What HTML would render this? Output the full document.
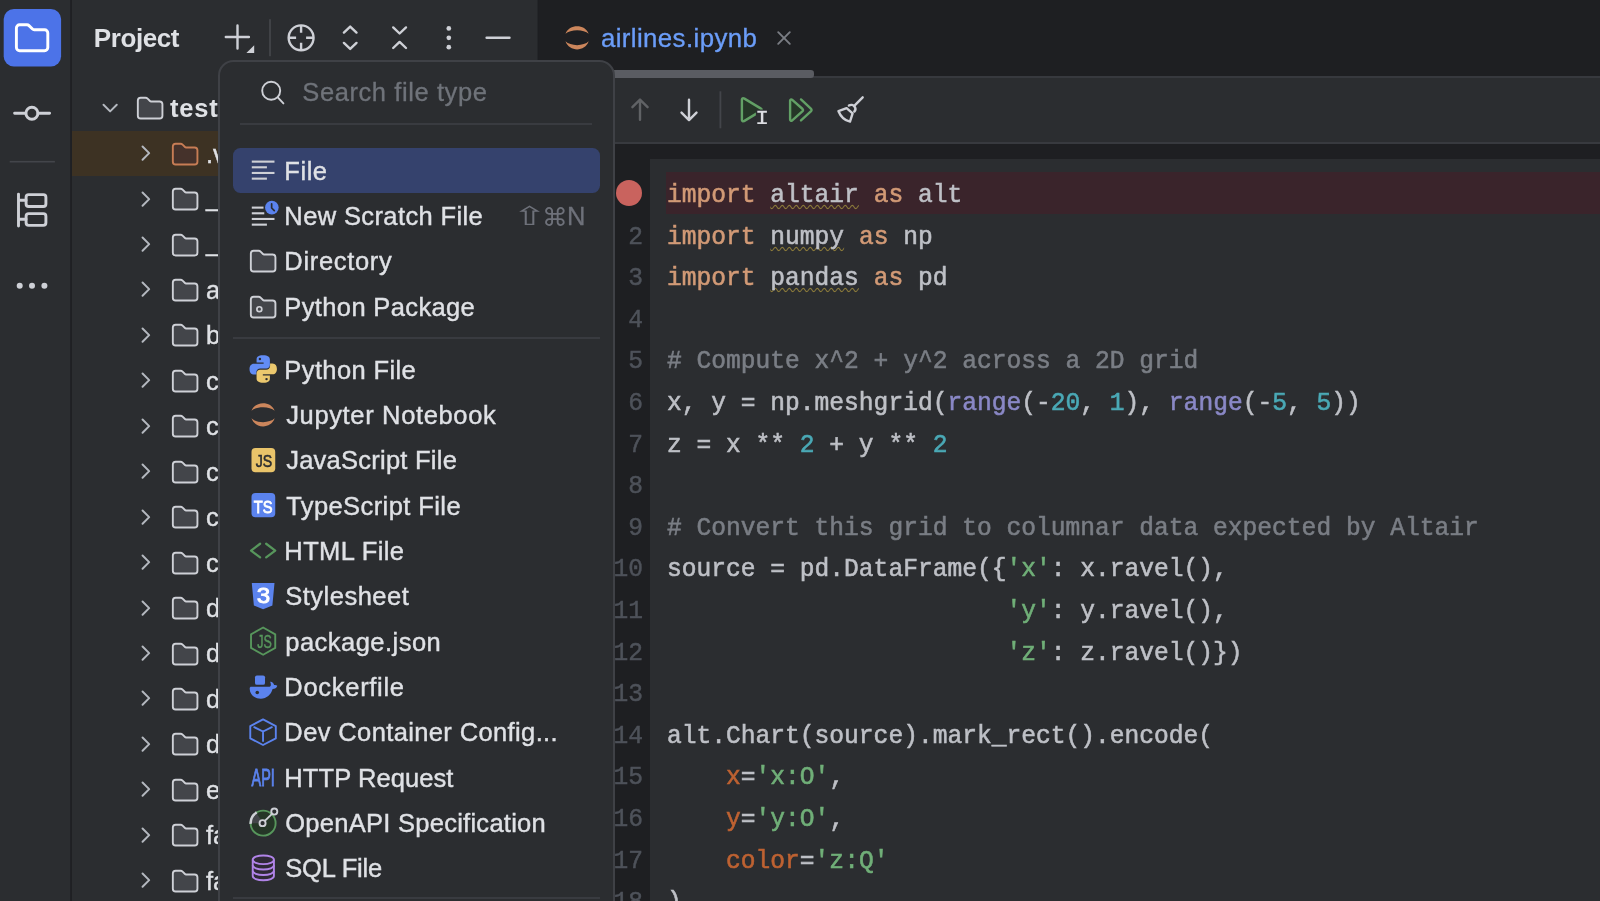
<!DOCTYPE html><html><head><meta charset="utf-8"><title>PyCharm</title><style>
*{box-sizing:border-box;margin:0;padding:0}
html,body{width:1600px;height:901px;overflow:hidden;background:#2b2d30}
body{position:relative;font-family:"Liberation Sans",sans-serif;color:#dfe1e5;font-size:25px}
.abs{position:absolute}
.ic{position:absolute;overflow:visible}
#root{position:absolute;left:0;top:0;width:1600px;height:901px;overflow:hidden;will-change:transform}
#stripe{position:absolute;left:0;top:0;width:72px;height:901px;background:#2b2d30}
#side{position:absolute;left:72px;top:0;width:466px;height:901px;background:#2b2d30}
#editor{position:absolute;left:538px;top:0;width:1062px;height:901px;background:#1e1f22}
.t{position:absolute;white-space:nowrap;line-height:30px;height:30px}
.row{position:absolute;left:0;width:220px;height:45.4px}
#popup{position:absolute;left:217.7px;top:59.9px;width:397.6px;height:900px;background:#2b2d30;border:2px solid #3f4146;border-radius:15.5px}
.mi{position:absolute;left:67px;white-space:nowrap;line-height:30px;height:30px;font-size:25.5px;color:#dfe1e5;-webkit-text-stroke:0.4px #dfe1e5}
.code{position:absolute;left:667px;white-space:pre;font-family:"Liberation Mono",monospace;font-size:24.6px;line-height:41.7px;height:41.7px;color:#bec0c6;-webkit-text-stroke:0.55px;transform:scaleY(1.08);transform-origin:0 27.4px}
.ln{position:absolute;width:60px;left:583px;text-align:right;font-family:"Liberation Mono",monospace;font-size:24.6px;line-height:41.7px;height:41.7px;color:#4e525a;white-space:pre;-webkit-text-stroke:0.45px;transform:scaleY(1.08);transform-origin:0 27.4px}
.k{color:#d29a76}.c{color:#7a7e85}.n{color:#4aa9b6}.s{color:#70af78}.b{color:#8a88c6}.a{color:#be6232}
.w{text-decoration:underline wavy #8b7a3a 1.4px;text-underline-offset:2.4px;text-decoration-skip-ink:none}
</style></head><body><div id="root">
<div id="stripe">
</div>
<div id="side">
<div class="t" style="left:21.8px;top:23px;font-weight:bold;font-size:26px;letter-spacing:-0.42px">Project</div>
<svg class="ic" style="left:22.87px;top:93.06px" width="30.27" height="30.27" viewBox="0 0 16 16" fill="none" ><path d="M4.5 6.2L8 9.7L11.5 6.2" stroke="#b4b8bf" stroke-width="1.05" stroke-linecap="round" stroke-linejoin="round"/></svg>
<svg class="ic" style="left:62.77px;top:92.77px" width="30.27" height="30.27" viewBox="0 0 16 16" fill="none" ><path d="M1.5 4V12C1.5 12.83 2.17 13.5 3 13.5H13C13.83 13.5 14.5 12.83 14.5 12V6C14.5 5.17 13.83 4.5 13 4.5H8.41C8.28 4.5 8.15 4.45 8.06 4.35L6.65 2.94C6.37 2.66 5.98 2.5 5.59 2.5H3C2.17 2.5 1.5 3.17 1.5 4Z" fill="#43454a" stroke="#ced0d6"/></svg>
<div class="t" style="left:98px;top:92.5px;font-weight:bold;font-size:25.5px;letter-spacing:0.8px">test</div>
<div class="abs" style="left:0;top:130.70px;width:200px;height:45px;background:#3d3223"></div>
<svg class="ic" style="left:59.06px;top:138.16px" width="30.27" height="30.27" viewBox="0 0 16 16" fill="none" ><path d="M6.1 4.5L9.6 8L6.1 11.5" stroke="#b4b8bf" stroke-width="1.05" stroke-linecap="round" stroke-linejoin="round"/></svg>
<svg class="ic" style="left:97.67px;top:138.66px" width="30.27" height="30.27" viewBox="0 0 16 16" fill="none" ><path d="M1.5 4V12C1.5 12.83 2.17 13.5 3 13.5H13C13.83 13.5 14.5 12.83 14.5 12V6C14.5 5.17 13.83 4.5 13 4.5H8.41C8.28 4.5 8.15 4.45 8.06 4.35L6.65 2.94C6.37 2.66 5.98 2.5 5.59 2.5H3C2.17 2.5 1.5 3.17 1.5 4Z" fill="#45322b" stroke="#c77d55"/></svg>
<div class="t" style="left:134px;top:138.60px;font-size:25.5px;-webkit-text-stroke:0.4px #dfe1e5">.venv</div>
<svg class="ic" style="left:59.06px;top:183.60px" width="30.27" height="30.27" viewBox="0 0 16 16" fill="none" ><path d="M6.1 4.5L9.6 8L6.1 11.5" stroke="#b4b8bf" stroke-width="1.05" stroke-linecap="round" stroke-linejoin="round"/></svg>
<svg class="ic" style="left:97.67px;top:184.10px" width="30.27" height="30.27" viewBox="0 0 16 16" fill="none" ><path d="M1.5 4V12C1.5 12.83 2.17 13.5 3 13.5H13C13.83 13.5 14.5 12.83 14.5 12V6C14.5 5.17 13.83 4.5 13 4.5H8.41C8.28 4.5 8.15 4.45 8.06 4.35L6.65 2.94C6.37 2.66 5.98 2.5 5.59 2.5H3C2.17 2.5 1.5 3.17 1.5 4Z" fill="#43454a" stroke="#ced0d6"/></svg>
<div class="t" style="left:134px;top:182.04px;font-size:25.5px;-webkit-text-stroke:0.4px #dfe1e5">__pycache__</div>
<svg class="ic" style="left:59.06px;top:229.04px" width="30.27" height="30.27" viewBox="0 0 16 16" fill="none" ><path d="M6.1 4.5L9.6 8L6.1 11.5" stroke="#b4b8bf" stroke-width="1.05" stroke-linecap="round" stroke-linejoin="round"/></svg>
<svg class="ic" style="left:97.67px;top:229.54px" width="30.27" height="30.27" viewBox="0 0 16 16" fill="none" ><path d="M1.5 4V12C1.5 12.83 2.17 13.5 3 13.5H13C13.83 13.5 14.5 12.83 14.5 12V6C14.5 5.17 13.83 4.5 13 4.5H8.41C8.28 4.5 8.15 4.45 8.06 4.35L6.65 2.94C6.37 2.66 5.98 2.5 5.59 2.5H3C2.17 2.5 1.5 3.17 1.5 4Z" fill="#43454a" stroke="#ced0d6"/></svg>
<div class="t" style="left:134px;top:227.48px;font-size:25.5px;-webkit-text-stroke:0.4px #dfe1e5">__init__</div>
<svg class="ic" style="left:59.06px;top:274.49px" width="30.27" height="30.27" viewBox="0 0 16 16" fill="none" ><path d="M6.1 4.5L9.6 8L6.1 11.5" stroke="#b4b8bf" stroke-width="1.05" stroke-linecap="round" stroke-linejoin="round"/></svg>
<svg class="ic" style="left:97.67px;top:274.99px" width="30.27" height="30.27" viewBox="0 0 16 16" fill="none" ><path d="M1.5 4V12C1.5 12.83 2.17 13.5 3 13.5H13C13.83 13.5 14.5 12.83 14.5 12V6C14.5 5.17 13.83 4.5 13 4.5H8.41C8.28 4.5 8.15 4.45 8.06 4.35L6.65 2.94C6.37 2.66 5.98 2.5 5.59 2.5H3C2.17 2.5 1.5 3.17 1.5 4Z" fill="#43454a" stroke="#ced0d6"/></svg>
<div class="t" style="left:134px;top:274.92px;font-size:25.5px;-webkit-text-stroke:0.4px #dfe1e5">airlines</div>
<svg class="ic" style="left:59.06px;top:319.93px" width="30.27" height="30.27" viewBox="0 0 16 16" fill="none" ><path d="M6.1 4.5L9.6 8L6.1 11.5" stroke="#b4b8bf" stroke-width="1.05" stroke-linecap="round" stroke-linejoin="round"/></svg>
<svg class="ic" style="left:97.67px;top:320.43px" width="30.27" height="30.27" viewBox="0 0 16 16" fill="none" ><path d="M1.5 4V12C1.5 12.83 2.17 13.5 3 13.5H13C13.83 13.5 14.5 12.83 14.5 12V6C14.5 5.17 13.83 4.5 13 4.5H8.41C8.28 4.5 8.15 4.45 8.06 4.35L6.65 2.94C6.37 2.66 5.98 2.5 5.59 2.5H3C2.17 2.5 1.5 3.17 1.5 4Z" fill="#43454a" stroke="#ced0d6"/></svg>
<div class="t" style="left:134px;top:320.36px;font-size:25.5px;-webkit-text-stroke:0.4px #dfe1e5">barley</div>
<svg class="ic" style="left:59.06px;top:365.37px" width="30.27" height="30.27" viewBox="0 0 16 16" fill="none" ><path d="M6.1 4.5L9.6 8L6.1 11.5" stroke="#b4b8bf" stroke-width="1.05" stroke-linecap="round" stroke-linejoin="round"/></svg>
<svg class="ic" style="left:97.67px;top:365.87px" width="30.27" height="30.27" viewBox="0 0 16 16" fill="none" ><path d="M1.5 4V12C1.5 12.83 2.17 13.5 3 13.5H13C13.83 13.5 14.5 12.83 14.5 12V6C14.5 5.17 13.83 4.5 13 4.5H8.41C8.28 4.5 8.15 4.45 8.06 4.35L6.65 2.94C6.37 2.66 5.98 2.5 5.59 2.5H3C2.17 2.5 1.5 3.17 1.5 4Z" fill="#43454a" stroke="#ced0d6"/></svg>
<div class="t" style="left:134px;top:365.80px;font-size:25.5px;-webkit-text-stroke:0.4px #dfe1e5">cars</div>
<svg class="ic" style="left:59.06px;top:410.81px" width="30.27" height="30.27" viewBox="0 0 16 16" fill="none" ><path d="M6.1 4.5L9.6 8L6.1 11.5" stroke="#b4b8bf" stroke-width="1.05" stroke-linecap="round" stroke-linejoin="round"/></svg>
<svg class="ic" style="left:97.67px;top:411.31px" width="30.27" height="30.27" viewBox="0 0 16 16" fill="none" ><path d="M1.5 4V12C1.5 12.83 2.17 13.5 3 13.5H13C13.83 13.5 14.5 12.83 14.5 12V6C14.5 5.17 13.83 4.5 13 4.5H8.41C8.28 4.5 8.15 4.45 8.06 4.35L6.65 2.94C6.37 2.66 5.98 2.5 5.59 2.5H3C2.17 2.5 1.5 3.17 1.5 4Z" fill="#43454a" stroke="#ced0d6"/></svg>
<div class="t" style="left:134px;top:411.24px;font-size:25.5px;-webkit-text-stroke:0.4px #dfe1e5">charts</div>
<svg class="ic" style="left:59.06px;top:456.25px" width="30.27" height="30.27" viewBox="0 0 16 16" fill="none" ><path d="M6.1 4.5L9.6 8L6.1 11.5" stroke="#b4b8bf" stroke-width="1.05" stroke-linecap="round" stroke-linejoin="round"/></svg>
<svg class="ic" style="left:97.67px;top:456.75px" width="30.27" height="30.27" viewBox="0 0 16 16" fill="none" ><path d="M1.5 4V12C1.5 12.83 2.17 13.5 3 13.5H13C13.83 13.5 14.5 12.83 14.5 12V6C14.5 5.17 13.83 4.5 13 4.5H8.41C8.28 4.5 8.15 4.45 8.06 4.35L6.65 2.94C6.37 2.66 5.98 2.5 5.59 2.5H3C2.17 2.5 1.5 3.17 1.5 4Z" fill="#43454a" stroke="#ced0d6"/></svg>
<div class="t" style="left:134px;top:456.68px;font-size:25.5px;-webkit-text-stroke:0.4px #dfe1e5">cities</div>
<svg class="ic" style="left:59.06px;top:501.69px" width="30.27" height="30.27" viewBox="0 0 16 16" fill="none" ><path d="M6.1 4.5L9.6 8L6.1 11.5" stroke="#b4b8bf" stroke-width="1.05" stroke-linecap="round" stroke-linejoin="round"/></svg>
<svg class="ic" style="left:97.67px;top:502.19px" width="30.27" height="30.27" viewBox="0 0 16 16" fill="none" ><path d="M1.5 4V12C1.5 12.83 2.17 13.5 3 13.5H13C13.83 13.5 14.5 12.83 14.5 12V6C14.5 5.17 13.83 4.5 13 4.5H8.41C8.28 4.5 8.15 4.45 8.06 4.35L6.65 2.94C6.37 2.66 5.98 2.5 5.59 2.5H3C2.17 2.5 1.5 3.17 1.5 4Z" fill="#43454a" stroke="#ced0d6"/></svg>
<div class="t" style="left:134px;top:502.12px;font-size:25.5px;-webkit-text-stroke:0.4px #dfe1e5">climate</div>
<svg class="ic" style="left:59.06px;top:547.12px" width="30.27" height="30.27" viewBox="0 0 16 16" fill="none" ><path d="M6.1 4.5L9.6 8L6.1 11.5" stroke="#b4b8bf" stroke-width="1.05" stroke-linecap="round" stroke-linejoin="round"/></svg>
<svg class="ic" style="left:97.67px;top:547.62px" width="30.27" height="30.27" viewBox="0 0 16 16" fill="none" ><path d="M1.5 4V12C1.5 12.83 2.17 13.5 3 13.5H13C13.83 13.5 14.5 12.83 14.5 12V6C14.5 5.17 13.83 4.5 13 4.5H8.41C8.28 4.5 8.15 4.45 8.06 4.35L6.65 2.94C6.37 2.66 5.98 2.5 5.59 2.5H3C2.17 2.5 1.5 3.17 1.5 4Z" fill="#43454a" stroke="#ced0d6"/></svg>
<div class="t" style="left:134px;top:547.56px;font-size:25.5px;-webkit-text-stroke:0.4px #dfe1e5">countries</div>
<svg class="ic" style="left:59.06px;top:592.56px" width="30.27" height="30.27" viewBox="0 0 16 16" fill="none" ><path d="M6.1 4.5L9.6 8L6.1 11.5" stroke="#b4b8bf" stroke-width="1.05" stroke-linecap="round" stroke-linejoin="round"/></svg>
<svg class="ic" style="left:97.67px;top:593.06px" width="30.27" height="30.27" viewBox="0 0 16 16" fill="none" ><path d="M1.5 4V12C1.5 12.83 2.17 13.5 3 13.5H13C13.83 13.5 14.5 12.83 14.5 12V6C14.5 5.17 13.83 4.5 13 4.5H8.41C8.28 4.5 8.15 4.45 8.06 4.35L6.65 2.94C6.37 2.66 5.98 2.5 5.59 2.5H3C2.17 2.5 1.5 3.17 1.5 4Z" fill="#43454a" stroke="#ced0d6"/></svg>
<div class="t" style="left:134px;top:593.00px;font-size:25.5px;-webkit-text-stroke:0.4px #dfe1e5">data</div>
<svg class="ic" style="left:59.06px;top:638.00px" width="30.27" height="30.27" viewBox="0 0 16 16" fill="none" ><path d="M6.1 4.5L9.6 8L6.1 11.5" stroke="#b4b8bf" stroke-width="1.05" stroke-linecap="round" stroke-linejoin="round"/></svg>
<svg class="ic" style="left:97.67px;top:638.50px" width="30.27" height="30.27" viewBox="0 0 16 16" fill="none" ><path d="M1.5 4V12C1.5 12.83 2.17 13.5 3 13.5H13C13.83 13.5 14.5 12.83 14.5 12V6C14.5 5.17 13.83 4.5 13 4.5H8.41C8.28 4.5 8.15 4.45 8.06 4.35L6.65 2.94C6.37 2.66 5.98 2.5 5.59 2.5H3C2.17 2.5 1.5 3.17 1.5 4Z" fill="#43454a" stroke="#ced0d6"/></svg>
<div class="t" style="left:134px;top:638.44px;font-size:25.5px;-webkit-text-stroke:0.4px #dfe1e5">datasets</div>
<svg class="ic" style="left:59.06px;top:683.45px" width="30.27" height="30.27" viewBox="0 0 16 16" fill="none" ><path d="M6.1 4.5L9.6 8L6.1 11.5" stroke="#b4b8bf" stroke-width="1.05" stroke-linecap="round" stroke-linejoin="round"/></svg>
<svg class="ic" style="left:97.67px;top:683.95px" width="30.27" height="30.27" viewBox="0 0 16 16" fill="none" ><path d="M1.5 4V12C1.5 12.83 2.17 13.5 3 13.5H13C13.83 13.5 14.5 12.83 14.5 12V6C14.5 5.17 13.83 4.5 13 4.5H8.41C8.28 4.5 8.15 4.45 8.06 4.35L6.65 2.94C6.37 2.66 5.98 2.5 5.59 2.5H3C2.17 2.5 1.5 3.17 1.5 4Z" fill="#43454a" stroke="#ced0d6"/></svg>
<div class="t" style="left:134px;top:683.88px;font-size:25.5px;-webkit-text-stroke:0.4px #dfe1e5">disasters</div>
<svg class="ic" style="left:59.06px;top:728.89px" width="30.27" height="30.27" viewBox="0 0 16 16" fill="none" ><path d="M6.1 4.5L9.6 8L6.1 11.5" stroke="#b4b8bf" stroke-width="1.05" stroke-linecap="round" stroke-linejoin="round"/></svg>
<svg class="ic" style="left:97.67px;top:729.39px" width="30.27" height="30.27" viewBox="0 0 16 16" fill="none" ><path d="M1.5 4V12C1.5 12.83 2.17 13.5 3 13.5H13C13.83 13.5 14.5 12.83 14.5 12V6C14.5 5.17 13.83 4.5 13 4.5H8.41C8.28 4.5 8.15 4.45 8.06 4.35L6.65 2.94C6.37 2.66 5.98 2.5 5.59 2.5H3C2.17 2.5 1.5 3.17 1.5 4Z" fill="#43454a" stroke="#ced0d6"/></svg>
<div class="t" style="left:134px;top:729.32px;font-size:25.5px;-webkit-text-stroke:0.4px #dfe1e5">driving</div>
<svg class="ic" style="left:59.06px;top:774.32px" width="30.27" height="30.27" viewBox="0 0 16 16" fill="none" ><path d="M6.1 4.5L9.6 8L6.1 11.5" stroke="#b4b8bf" stroke-width="1.05" stroke-linecap="round" stroke-linejoin="round"/></svg>
<svg class="ic" style="left:97.67px;top:774.82px" width="30.27" height="30.27" viewBox="0 0 16 16" fill="none" ><path d="M1.5 4V12C1.5 12.83 2.17 13.5 3 13.5H13C13.83 13.5 14.5 12.83 14.5 12V6C14.5 5.17 13.83 4.5 13 4.5H8.41C8.28 4.5 8.15 4.45 8.06 4.35L6.65 2.94C6.37 2.66 5.98 2.5 5.59 2.5H3C2.17 2.5 1.5 3.17 1.5 4Z" fill="#43454a" stroke="#ced0d6"/></svg>
<div class="t" style="left:134px;top:774.76px;font-size:25.5px;-webkit-text-stroke:0.4px #dfe1e5">earthquakes</div>
<svg class="ic" style="left:59.06px;top:819.76px" width="30.27" height="30.27" viewBox="0 0 16 16" fill="none" ><path d="M6.1 4.5L9.6 8L6.1 11.5" stroke="#b4b8bf" stroke-width="1.05" stroke-linecap="round" stroke-linejoin="round"/></svg>
<svg class="ic" style="left:97.67px;top:820.26px" width="30.27" height="30.27" viewBox="0 0 16 16" fill="none" ><path d="M1.5 4V12C1.5 12.83 2.17 13.5 3 13.5H13C13.83 13.5 14.5 12.83 14.5 12V6C14.5 5.17 13.83 4.5 13 4.5H8.41C8.28 4.5 8.15 4.45 8.06 4.35L6.65 2.94C6.37 2.66 5.98 2.5 5.59 2.5H3C2.17 2.5 1.5 3.17 1.5 4Z" fill="#43454a" stroke="#ced0d6"/></svg>
<div class="t" style="left:134px;top:820.20px;font-size:25.5px;-webkit-text-stroke:0.4px #dfe1e5">factors</div>
<svg class="ic" style="left:59.06px;top:865.21px" width="30.27" height="30.27" viewBox="0 0 16 16" fill="none" ><path d="M6.1 4.5L9.6 8L6.1 11.5" stroke="#b4b8bf" stroke-width="1.05" stroke-linecap="round" stroke-linejoin="round"/></svg>
<svg class="ic" style="left:97.67px;top:865.71px" width="30.27" height="30.27" viewBox="0 0 16 16" fill="none" ><path d="M1.5 4V12C1.5 12.83 2.17 13.5 3 13.5H13C13.83 13.5 14.5 12.83 14.5 12V6C14.5 5.17 13.83 4.5 13 4.5H8.41C8.28 4.5 8.15 4.45 8.06 4.35L6.65 2.94C6.37 2.66 5.98 2.5 5.59 2.5H3C2.17 2.5 1.5 3.17 1.5 4Z" fill="#43454a" stroke="#ced0d6"/></svg>
<div class="t" style="left:134px;top:865.64px;font-size:25.5px;-webkit-text-stroke:0.4px #dfe1e5">faithful</div>
</div>
<div id="editor">
<svg class="ic" style="left:24.40px;top:22.90px" width="30.27" height="30.27" viewBox="0 0 16 16" fill="none" ><path d="M1.85 5.7C3.8 0.43 12.2 0.43 14.1 5.7C11.6 3.23 4.4 3.23 1.85 5.7Z" fill="#cc865c"/><path d="M1.85 9.7C3.8 15.43 12.2 15.43 14.1 9.7C11.6 12.37 4.4 12.37 1.85 9.7Z" fill="#cc865c"/></svg>
<div class="t" style="left:62.89999999999998px;top:23.1px;color:#6b9df8;font-size:25.8px;letter-spacing:0.414px;-webkit-text-stroke:0.35px #6b9df8">airlines.ipynb</div>
<svg class="ic" style="left:236.10000000000002px;top:27.95px" width="20" height="20" viewBox="0 0 20 20" fill="none"><path d="M4.2 4.2L15.8 15.8M15.8 4.2L4.2 15.8" stroke="#7a7d84" stroke-width="1.9" stroke-linecap="round"/></svg>
<div class="abs" style="left:0;top:76px;width:1062px;height:68.2px;background:#2b2d30"></div>
<div class="abs" style="left:0;top:76px;width:1062px;height:2.2px;background:#37393e"></div>
<div class="abs" style="left:0;top:142px;width:1062px;height:2.2px;background:#383a3f"></div>
<div class="abs" style="left:18px;top:70px;width:258.2px;height:8px;background:#5a5c62;border-radius:0 3.2px 3.2px 0"></div>
<div class="abs" style="left:112px;top:158.8px;width:960px;height:760px;background:#2b2d30"></div>
<div class="abs" style="left:128px;top:172.2px;width:960px;height:41.4px;background:#3a242b"></div>
<div class="abs" style="left:77.59999999999995px;top:179.9px;width:26.4px;height:26.4px;border-radius:50%;background:#c9635e"></div>
</div>
<div class="code" style="top:174.90px"><span class="k">import</span> <span class="w">altair</span> <span class="k">as</span> alt</div>
<div class="ln" style="top:216.50px">2</div>
<div class="code" style="top:216.50px"><span class="k">import</span> <span class="w">numpy</span> <span class="k">as</span> np</div>
<div class="ln" style="top:258.10px">3</div>
<div class="code" style="top:258.10px"><span class="k">import</span> <span class="w">pandas</span> <span class="k">as</span> pd</div>
<div class="ln" style="top:299.70px">4</div>
<div class="code" style="top:299.70px"></div>
<div class="ln" style="top:341.30px">5</div>
<div class="code" style="top:341.30px"><span class="c"># Compute x^2 + y^2 across a 2D grid</span></div>
<div class="ln" style="top:382.90px">6</div>
<div class="code" style="top:382.90px">x, y = np.meshgrid(<span class="b">range</span>(-<span class="n">20</span>, <span class="n">1</span>), <span class="b">range</span>(-<span class="n">5</span>, <span class="n">5</span>))</div>
<div class="ln" style="top:424.50px">7</div>
<div class="code" style="top:424.50px">z = x ** <span class="n">2</span> + y ** <span class="n">2</span></div>
<div class="ln" style="top:466.10px">8</div>
<div class="code" style="top:466.10px"></div>
<div class="ln" style="top:507.70px">9</div>
<div class="code" style="top:507.70px"><span class="c"># Convert this grid to columnar data expected by Altair</span></div>
<div class="ln" style="top:549.30px">10</div>
<div class="code" style="top:549.30px">source = pd.DataFrame({<span class="s">'x'</span>: x.ravel(),</div>
<div class="ln" style="top:590.90px">11</div>
<div class="code" style="top:590.90px">                       <span class="s">'y'</span>: y.ravel(),</div>
<div class="ln" style="top:632.50px">12</div>
<div class="code" style="top:632.50px">                       <span class="s">'z'</span>: z.ravel()})</div>
<div class="ln" style="top:674.10px">13</div>
<div class="code" style="top:674.10px"></div>
<div class="ln" style="top:715.70px">14</div>
<div class="code" style="top:715.70px">alt.Chart(source).mark_rect().encode(</div>
<div class="ln" style="top:757.30px">15</div>
<div class="code" style="top:757.30px">    <span class="a">x</span>=<span class="s">'x:O'</span>,</div>
<div class="ln" style="top:798.90px">16</div>
<div class="code" style="top:798.90px">    <span class="a">y</span>=<span class="s">'y:O'</span>,</div>
<div class="ln" style="top:840.50px">17</div>
<div class="code" style="top:840.50px">    <span class="a">color</span>=<span class="s">'z:Q'</span></div>
<div class="ln" style="top:882.10px">18</div>
<div class="code" style="top:882.10px">)</div>
<svg class="ic" style="left:0;top:0" width="1600" height="901" viewBox="0 0 1600 901" fill="none">
<rect x="70.2" y="0" width="1.8" height="901" fill="#1f2023"/><rect x="537.55" y="0" width="0.5" height="901" fill="#1e1f22"/>
<rect x="3.7" y="8.9" width="57.4" height="57.5" rx="10.2" fill="#4c73e8"/>
<path d="M16.4 28V47.5A3.2 3.2 0 0 0 19.6 50.7H44.6A3.2 3.2 0 0 0 47.8 47.5V32.95A3.2 3.2 0 0 0 44.6 29.75H34.2A2.4 2.4 0 0 1 32.5 29.05L29 25.6A2.8 2.8 0 0 0 27 24.8H19.6A3.2 3.2 0 0 0 16.4 28Z" stroke="#ffffff" stroke-width="2.9" stroke-linejoin="round"/>
<path d="M14.6 113.2H25.8M38 113.2H49.6" stroke="#ced0d6" stroke-width="2.9" stroke-linecap="round"/><circle cx="31.9" cy="113.2" r="6" stroke="#ced0d6" stroke-width="2.9"/>
<rect x="9.7" y="160.9" width="45.2" height="1.6" fill="#43454a"/>
<path d="M18.5 194.1V226M18.5 200.2H26M18.5 219.2H26" stroke="#ced0d6" stroke-width="2.9" stroke-linecap="round"/>
<rect x="26.1" y="194.65" width="19.8" height="11.85" rx="2.6" stroke="#ced0d6" stroke-width="2.9"/><rect x="26.1" y="213.6" width="19.8" height="11.8" rx="2.6" stroke="#ced0d6" stroke-width="2.9"/>
<circle cx="19.7" cy="285.8" r="3" fill="#ced0d6"/>
<circle cx="32" cy="285.8" r="3" fill="#ced0d6"/>
<circle cx="44.4" cy="285.8" r="3" fill="#ced0d6"/>
<path d="M237.5 25.4V48.5M225.8 37H248.9" stroke="#ced0d6" stroke-width="2.4" stroke-linecap="round"/><path d="M246.4 53H254.2V45.2Z" fill="#ced0d6"/>
<rect x="269.1" y="19.2" width="1.8" height="37" fill="#43454a"/>
<circle cx="301.1" cy="37.8" r="12.45" stroke="#ced0d6" stroke-width="2.4"/><path d="M301.1 25.4V32.8M301.1 42.8V50.2M288.7 37.8H296.1M306.1 37.8H313.5" stroke="#ced0d6" stroke-width="2.4"/>
<path d="M343.9 32.6L350.2 26.6L356.5 32.6M343.9 42.9L350.2 48.9L356.5 42.9" stroke="#ced0d6" stroke-width="2.4" stroke-linecap="round" stroke-linejoin="round"/>
<path d="M393.2 27.4L399.6 33.5L406 27.4M393.2 48L399.6 41.9L406 48" stroke="#ced0d6" stroke-width="2.4" stroke-linecap="round" stroke-linejoin="round"/>
<circle cx="448.8" cy="28.4" r="2.35" fill="#ced0d6"/>
<circle cx="448.8" cy="37.8" r="2.35" fill="#ced0d6"/>
<circle cx="448.8" cy="47.2" r="2.35" fill="#ced0d6"/>
<path d="M486.6 37.8H509.5" stroke="#ced0d6" stroke-width="2.4" stroke-linecap="round"/>
<!--OV2-->
</svg>
<svg class="ic" style="left:0;top:0" width="1600" height="901" viewBox="0 0 1600 901" fill="none">
<path d="M640 119.8V99.8M632.4 107.2L640 99.6L647.6 107.2" stroke="#606265" stroke-width="2.4" stroke-linecap="round" stroke-linejoin="round"/>
<path d="M689 99.7V119.8M681.5 112.6L689 120.1L696.5 112.6" stroke="#ced0d6" stroke-width="2.4" stroke-linecap="round" stroke-linejoin="round"/>
<rect x="719.5" y="91.3" width="1.8" height="37" fill="#43454a"/>
<path d="M741.9 99.6V119.9C741.9 121 743.1 121.7 744 121.1L761 110.9C761.9 110.4 761.9 109.1 761 108.6L744 98.4C743.1 97.8 741.9 98.5 741.9 99.6Z" fill="#253627" stroke="#62a065" stroke-width="2.4" stroke-linejoin="round"/>
<rect x="755.9" y="109.6" width="12.2" height="16" fill="#2b2d30"/>
<path d="M757.3 111.8H766.9M757.3 123.1H766.9" stroke="#dcdde2" stroke-width="1.9"/><path d="M762.1 111.8V123.1" stroke="#dcdde2" stroke-width="2.5"/>
<path d="M790.1 100.6V119.6C790.1 120.6 791.2 121.2 792 120.6L802.6 111.2C803.2 110.6 803.2 109.6 802.6 109L792 99.6C791.2 99 790.1 99.6 790.1 100.6Z" fill="#253627" stroke="#62a065" stroke-width="2.4" stroke-linejoin="round"/>
<path d="M801 99.4L811.1 108.9C811.7 109.5 811.7 110.5 811.1 111.1L801 120.4" stroke="#62a065" stroke-width="2.4" stroke-linecap="round" stroke-linejoin="round"/>
<path d="M862.7 97.3L854 106.1" stroke="#ced0d6" stroke-width="2.4" stroke-linecap="round"/>
<path d="M848.9 105.6C850.8 104.4 853.3 104.8 854.6 106.6C855.8 108.2 855.5 110.3 854.3 111.6" stroke="#ced0d6" stroke-width="2.4" stroke-linecap="round"/>
<path d="M846.6 108.1L852.6 113.4L850 121.6C845.3 120.6 840.7 116.6 838.5 111.2Z" stroke="#ced0d6" stroke-width="2.4" stroke-linejoin="round"/>
</svg>
<div id="popup">
<svg class="ic" style="left:36.30000000000001px;top:14.100000000000001px" width="32" height="32" viewBox="0 0 32 32" fill="none"><circle cx="15.2" cy="14.8" r="9" stroke="#ced0d6" stroke-width="1.9"/><path d="M21.8 21.4L27.4 27.4" stroke="#ced0d6" stroke-width="1.9" stroke-linecap="round"/></svg>
<div class="t" style="left:82.60000000000002px;top:15.3px;color:#6f737a;font-size:25.5px;letter-spacing:0.588px;-webkit-text-stroke:0.3px #6f737a">Search file type</div>
<div class="abs" style="left:20.80000000000001px;top:61.1px;width:352px;height:2px;background:#393b40"></div>
<div class="abs" style="left:13.300000000000011px;top:86.1px;width:367.5px;height:45px;border-radius:7.5px;background:#35426d"></div>
<div class="abs" style="left:13.300000000000011px;top:274.8px;width:367.5px;height:2px;background:#393b40"></div>
<div class="abs" style="left:13.300000000000011px;top:835.3000000000001px;width:367.5px;height:2px;background:#393b40"></div>
<div class="mi" style="left:64.68px;top:93.70px;letter-spacing:0.528px">File</div>
<svg class="ic" style="left:28.50px;top:93.60px" width="30.27" height="30.27" viewBox="0 0 16 16" fill="none" ><path d="M2 3.5H14" stroke="#ced0d6" stroke-width="1.12"/><path d="M2 6.5H10" stroke="#ced0d6" stroke-width="1.12"/><path d="M2 9.5H14" stroke="#ced0d6" stroke-width="1.12"/><path d="M2 12.5H10" stroke="#ced0d6" stroke-width="1.12"/></svg>
<div class="mi" style="left:64.68px;top:139.12px;letter-spacing:0.379px">New Scratch File</div>
<svg class="ic" style="left:28.50px;top:139.02px" width="30.27" height="30.27" viewBox="0 0 16 16" fill="none" ><path d="M2 3.5H8.2" stroke="#ced0d6" stroke-width="1.12"/><path d="M2 6.5H8.6" stroke="#ced0d6" stroke-width="1.12"/><path d="M2 9.5H14" stroke="#ced0d6" stroke-width="1.12"/><path d="M2 12.5H10" stroke="#ced0d6" stroke-width="1.12"/><circle cx="12.6" cy="3.5" r="3.6" fill="#5b83ee"/><path d="M12.5 1.5V3.7L13.9 5.1" stroke="#2b2d30" stroke-width="0.9" stroke-linecap="round" stroke-linejoin="round" fill="none"/></svg>
<div class="mi" style="left:64.68px;top:184.54px;letter-spacing:0.671px">Directory</div>
<svg class="ic" style="left:28.50px;top:184.44px" width="30.27" height="30.27" viewBox="0 0 16 16" fill="none" ><path d="M1.5 4V12C1.5 12.83 2.17 13.5 3 13.5H13C13.83 13.5 14.5 12.83 14.5 12V6C14.5 5.17 13.83 4.5 13 4.5H8.41C8.28 4.5 8.15 4.45 8.06 4.35L6.65 2.94C6.37 2.66 5.98 2.5 5.59 2.5H3C2.17 2.5 1.5 3.17 1.5 4Z" fill="#43454a" stroke="#ced0d6"/></svg>
<div class="mi" style="left:64.68px;top:229.96px;letter-spacing:0.363px">Python Package</div>
<svg class="ic" style="left:28.50px;top:229.86px" width="30.27" height="30.27" viewBox="0 0 16 16" fill="none" ><path d="M1.5 4V12C1.5 12.83 2.17 13.5 3 13.5H13C13.83 13.5 14.5 12.83 14.5 12V6C14.5 5.17 13.83 4.5 13 4.5H8.41C8.28 4.5 8.15 4.45 8.06 4.35L6.65 2.94C6.37 2.66 5.98 2.5 5.59 2.5H3C2.17 2.5 1.5 3.17 1.5 4Z" fill="#43454a" stroke="#ced0d6"/><circle cx="6" cy="9.1" r="1.3" stroke="#ced0d6" stroke-width="0.9" fill="none"/></svg>
<div class="mi" style="left:64.68px;top:292.70px;letter-spacing:0.386px">Python File</div>
<svg class="ic" style="left:28.50px;top:292.60px" width="30.27" height="30.27" viewBox="0 0 16 16" fill="none" ><g transform="translate(8.05 7.95) scale(1.035) translate(-8 -8)"><path d="M7.9 1C5.4 1 4.6 1.9 4.6 3.2V4.7H8.2V5.3H3.2C1.8 5.3 1 6.5 1 8C1 9.7 1.8 10.8 3.2 10.8H4.5V9.6C4.5 8.5 5.4 7.7 6.5 7.7H9.6C10.6 7.7 11.4 6.9 11.4 5.9V3.2C11.4 1.9 10.4 1 7.9 1Z" fill="#628cf5"/><circle cx="6.3" cy="2.85" r="0.62" fill="#2b2d30"/><path d="M8.1 15C10.6 15 11.4 14.1 11.4 12.8V11.3H7.8V10.7H12.8C14.2 10.7 15 9.5 15 8C15 6.3 14.2 5.2 12.8 5.2H11.5V6.4C11.5 7.5 10.6 8.3 9.5 8.3H6.4C5.4 8.3 4.6 9.1 4.6 10.1V12.8C4.6 14.1 5.6 15 8.1 15Z" fill="#ebc86e"/><circle cx="9.7" cy="13.15" r="0.62" fill="#2b2d30"/></g></svg>
<div class="mi" style="left:66.48px;top:338.03px;letter-spacing:0.650px">Jupyter Notebook</div>
<svg class="ic" style="left:28.50px;top:337.93px" width="30.27" height="30.27" viewBox="0 0 16 16" fill="none" ><path d="M1.85 5.7C3.8 0.43 12.2 0.43 14.1 5.7C11.6 3.23 4.4 3.23 1.85 5.7Z" fill="#cc865c"/><path d="M1.85 9.7C3.8 15.43 12.2 15.43 14.1 9.7C11.6 12.37 4.4 12.37 1.85 9.7Z" fill="#cc865c"/></svg>
<div class="mi" style="left:66.48px;top:383.36px;letter-spacing:0.246px">JavaScript File</div>
<svg class="ic" style="left:28.50px;top:383.26px" width="30.27" height="30.27" viewBox="0 0 16 16" fill="none" ><rect x="1.85" y="1.65" width="12.55" height="12.7" rx="2.1" fill="#e9c46a"/><text x="4.1" y="11.55" font-family="Liberation Sans, sans-serif" font-size="8.5" fill="#2b2d30" stroke="#2b2d30" stroke-width="0.3" textLength="8.7" lengthAdjust="spacingAndGlyphs">JS</text></svg>
<div class="mi" style="left:66.48px;top:428.69px;letter-spacing:0.416px">TypeScript File</div>
<svg class="ic" style="left:28.50px;top:428.59px" width="30.27" height="30.27" viewBox="0 0 16 16" fill="none" ><rect x="1.85" y="1.65" width="12.55" height="12.7" rx="2.1" fill="#5b83ee"/><text x="3.05" y="11.9" font-family="Liberation Sans, sans-serif" font-size="9.0" fill="#ffffff" stroke="#ffffff" stroke-width="0.4" textLength="9.9" lengthAdjust="spacingAndGlyphs">TS</text></svg>
<div class="mi" style="left:64.68px;top:474.02px;letter-spacing:0.362px">HTML File</div>
<svg class="ic" style="left:28.50px;top:473.92px" width="30.27" height="30.27" viewBox="0 0 16 16" fill="none" ><path d="M6.4 4.1L1.6 7.7L6.4 11.3M9.6 4.1L14.4 7.7L9.6 11.3" stroke="#57965c" stroke-width="1.2" fill="none" stroke-linecap="round" stroke-linejoin="round"/></svg>
<div class="mi" style="left:65.58px;top:519.35px;letter-spacing:0.488px">Stylesheet</div>
<svg class="ic" style="left:28.50px;top:519.25px" width="30.27" height="30.27" viewBox="0 0 16 16" fill="none" ><path d="M2 1H14L12.9 12.9L8 15L3.1 12.9Z" fill="#5b83ee"/><text x="4.6" y="11.65" font-family="Liberation Sans, sans-serif" font-size="11.6" fill="#ffffff" stroke="#ffffff" stroke-width="0.45" textLength="7.1" lengthAdjust="spacingAndGlyphs">3</text></svg>
<div class="mi" style="left:65.58px;top:564.68px;letter-spacing:0.471px">package.json</div>
<svg class="ic" style="left:28.50px;top:564.58px" width="30.27" height="30.27" viewBox="0 0 16 16" fill="none" ><path d="M8 0.8L14.4 4.4V11.6L8 15.2L1.6 11.6V4.4Z" stroke="#57965c" stroke-width="1" fill="none" stroke-linejoin="round"/><text x="4.9" y="11.45" font-family="Liberation Sans, sans-serif" font-size="9.4" fill="#57965c" stroke="#57965c" stroke-width="0.25" textLength="7.7" lengthAdjust="spacingAndGlyphs">JS</text></svg>
<div class="mi" style="left:64.68px;top:610.01px;letter-spacing:0.699px">Dockerfile</div>
<svg class="ic" style="left:28.50px;top:609.91px" width="30.27" height="30.27" viewBox="0 0 16 16" fill="none" ><rect x="3.7" y="1.8" width="5.3" height="5" rx="1" fill="#5b83ee"/><path d="M0.9 8.6C0.9 8.1 1.2 7.8 1.7 7.8H11.4C12.2 7.5 12.3 6.5 11.7 5.2C12.6 5 13.6 5.8 13.8 6.9C14.4 6.7 15.1 6.9 15.5 7.3C15.2 8.4 14.2 9 13 9C12.2 12 9.8 14.1 6.8 14.1C3.2 14.1 0.9 11.8 0.9 8.6Z" fill="#5b83ee"/><circle cx="4.9" cy="10.8" r="0.95" fill="#2b2d30"/></svg>
<div class="mi" style="left:64.68px;top:655.34px;letter-spacing:0.374px">Dev Container Config...</div>
<svg class="ic" style="left:28.50px;top:655.24px" width="30.27" height="30.27" viewBox="0 0 16 16" fill="none" ><path d="M7.95 1.3L14.7 4.8V11.3L7.95 14.8L1.2 11.3V4.8Z" stroke="#5b83ee" stroke-width="1" fill="none" stroke-linejoin="round"/><path d="M3.3 5.4L7.95 7.7L12.6 5.4M7.95 7.7V12.7" stroke="#5b83ee" stroke-width="1" fill="none" stroke-linecap="round"/></svg>
<div class="mi" style="left:64.68px;top:700.67px;letter-spacing:0.077px">HTTP Request</div>
<svg class="ic" style="left:28.50px;top:700.57px" width="30.27" height="30.27" viewBox="0 0 16 16" fill="none" ><text x="1.9" y="12.55" font-family="Liberation Sans, sans-serif" font-size="12.8" fill="#5b83ee" stroke="#5b83ee" stroke-width="0.5" textLength="12.3" lengthAdjust="spacingAndGlyphs">API</text></svg>
<div class="mi" style="left:65.58px;top:746.00px;letter-spacing:0.267px">OpenAPI Specification</div>
<svg class="ic" style="left:28.50px;top:745.90px" width="30.27" height="30.27" viewBox="0 0 16 16" fill="none" ><circle cx="8.0" cy="8.0" r="6.6" fill="#253627" stroke="#57965c" stroke-width="1"/><path d="M8 8L1.4 8A6.6 6.6 0 0 1 4.4 2.47Z" fill="#43454a"/><path d="M1.4 8.4A6.6 6.6 0 0 1 4.6 2.35" stroke="#ced0d6" stroke-width="1.35" fill="none"/><path d="M7.7 8L13.9 1.9" stroke="#ced0d6" stroke-width="1"/><circle cx="7.7" cy="8" r="1.6" fill="#2b2d30" stroke="#ced0d6" stroke-width="1"/><circle cx="13.9" cy="1.9" r="1.6" fill="#2b2d30" stroke="#ced0d6" stroke-width="1"/></svg>
<div class="mi" style="left:65.58px;top:791.33px;letter-spacing:-0.194px">SQL File</div>
<svg class="ic" style="left:28.50px;top:791.23px" width="30.27" height="30.27" viewBox="0 0 16 16" fill="none" ><path d="M2.5 3.6V12.2C2.5 13.5 5 14.4 8.1 14.4C11.2 14.4 13.7 13.5 13.7 12.2V3.6" fill="#2f2936" stroke="#b184e8" stroke-width="1"/><ellipse cx="8.1" cy="3.6" rx="5.6" ry="2.3" fill="#2f2936" stroke="#b184e8" stroke-width="1"/><path d="M2.5 6.5C2.5 7.8 5 8.7 8.1 8.7C11.2 8.7 13.7 7.8 13.7 6.5M2.5 9.4C2.5 10.7 5 11.6 8.1 11.6C11.2 11.6 13.7 10.7 13.7 9.4" fill="none" stroke="#b184e8" stroke-width="1"/></svg>
<div class="t" style="left:292.70px;top:139.20px;color:#6e717a;font-size:26.1px;transform:scaleX(1.61);transform-origin:0 50%">⇧</div>
<div class="t" style="left:322.20px;top:139.70px;color:#6e717a;font-size:25.2px;transform:scaleX(1.03);transform-origin:0 50%">⌘</div>
<div class="t" style="left:347.30px;top:139.20px;color:#6e717a;font-size:25.5px;-webkit-text-stroke:0.3px #6e717a">N</div>
<!--ICONS-->
</div>
</div></body></html>
